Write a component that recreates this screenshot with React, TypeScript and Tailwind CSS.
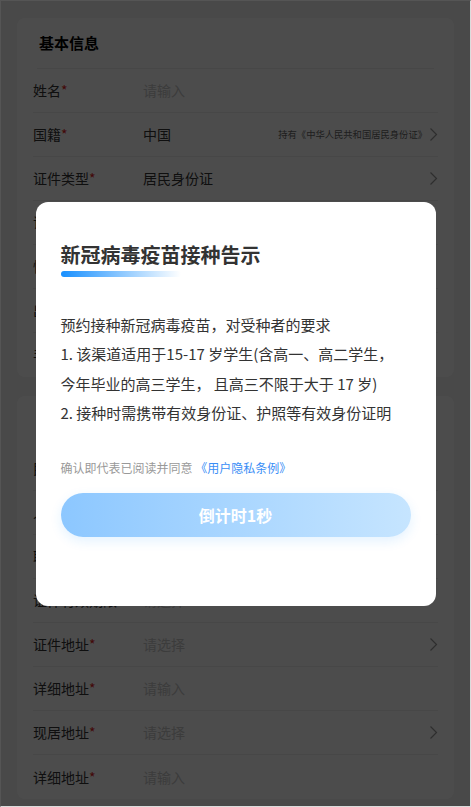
import React from "react";

function Chevron() {
  return (
    <svg width="9" height="15" viewBox="0 0 9 15" className="shrink-0">
      <polyline points="1.5,1.5 7.5,7.5 1.5,13.5" fill="none" stroke="#999" strokeWidth="1.2" />
    </svg>
  );
}

type Row = { label: string; value?: string; placeholder?: string; arrow?: boolean; hint?: string };

const basic: Row[] = [
  { label: "姓名", placeholder: "请输入" },
  { label: "国籍", value: "中国", arrow: true, hint: "持有《中华人民共和国居民身份证》" },
  { label: "证件类型", value: "居民身份证", arrow: true },
  { label: "证件号码", placeholder: "请输入" },
  { label: "性别", placeholder: "请选择" },
  { label: "出生日期", placeholder: "请选择" },
  { label: "手机号码", placeholder: "请输入" },
];

const other: Row[] = [
  { label: "民族", placeholder: "请选择" },
  { label: "人群分类", placeholder: "请选择" },
  { label: "职业", placeholder: "请选择" },
  { label: "证件有效期限", placeholder: "请选择" },
  { label: "证件地址", placeholder: "请选择", arrow: true },
  { label: "详细地址", placeholder: "请输入" },
  { label: "现居地址", placeholder: "请选择", arrow: true },
  { label: "详细地址", placeholder: "请输入" },
];

function FormRow({ row, last }: { row: Row; last: boolean }) {
  return (
    <div className={`flex h-[44px] items-center text-[14px] ${last ? "" : "border-b border-[#eeeeee]"}`}>
      <div className="w-[110px] shrink-0 text-[#333]">
        {row.label}
        <span className="text-[#e02020]">*</span>
      </div>
      <div className={`flex-1 ${row.value ? "text-[#333]" : "text-[#c8c8c8]"}`}>
        {row.value ?? row.placeholder}
      </div>
      {row.hint && <span className="mr-[2px] text-[9.3px] text-[#666]">{row.hint}</span>}
      {row.arrow && <Chevron />}
    </div>
  );
}

function Card({ title, rows, className }: { title: string; rows: Row[]; className?: string }) {
  return (
    <div className={`rounded-lg bg-white px-[16px] ${className ?? ""}`}>
      <div className="mx-[4px] flex h-[51px] items-center border-b border-[#eeeeee] pl-[2px] text-[15px] font-bold text-black">
        {title}
      </div>
      {rows.map((r, i) => (
        <FormRow key={i} row={r} last={i === rows.length - 1} />
      ))}
    </div>
  );
}

export default function App() {
  return (
    <div
      className="relative h-[807px] w-[471px] overflow-hidden border border-b-[#dcdcdc] border-l-[#555] border-r-[#dcdcdc] border-t-[#555] bg-[#f4f4f4] px-[16px] pt-[17px]"
      style={{ fontFamily: '"Noto Sans CJK SC", "Noto Sans", sans-serif' }}
    >
      <Card title="基本信息" rows={basic} />
      <Card title="其他信息" rows={other} className="mt-[19px]" />

      <div className="absolute inset-0 flex items-center justify-center bg-black/70">
        <div className="w-[400px] rounded-xl bg-white px-[25px] pb-[69px] pt-[39px]">
          <div className="h-[28px] text-[20px] font-bold leading-[28px] text-[#333]">新冠病毒疫苗接种告示</div>
          <div className="mt-[2px] h-[6px] w-[120px] rounded-full bg-gradient-to-r from-[#1890ff] to-white/0" />
          <div className="mt-[33px] whitespace-nowrap text-[15px] leading-[29.5px] text-[#333]">
            <div>预约接种新冠病毒疫苗，对受种者的要求</div>
            <div>1. 该渠道适用于15-17 岁学生(含高一、高二学生，</div>
            <div>今年毕业的高三学生， 且高三不限于大于 17 岁)</div>
            <div>2. 接种时需携带有效身份证、护照等有效身份证明</div>
          </div>
          <div className="mt-[30px] text-[12px] leading-[20px] text-[#999]">
            确认即代表已阅读并同意 <span className="text-[#3a8ef6]">《用户隐私条例》</span>
          </div>
          <button className="mt-[15px] flex h-[44px] w-full items-center justify-center rounded-full bg-gradient-to-r from-[#8cc7ff] to-[#c6e5ff] text-[16px] font-bold text-white shadow-[0_4px_12px_rgba(24,144,255,0.12)]">
            倒计时1秒
          </button>
        </div>
      </div>
    </div>
  );
}
